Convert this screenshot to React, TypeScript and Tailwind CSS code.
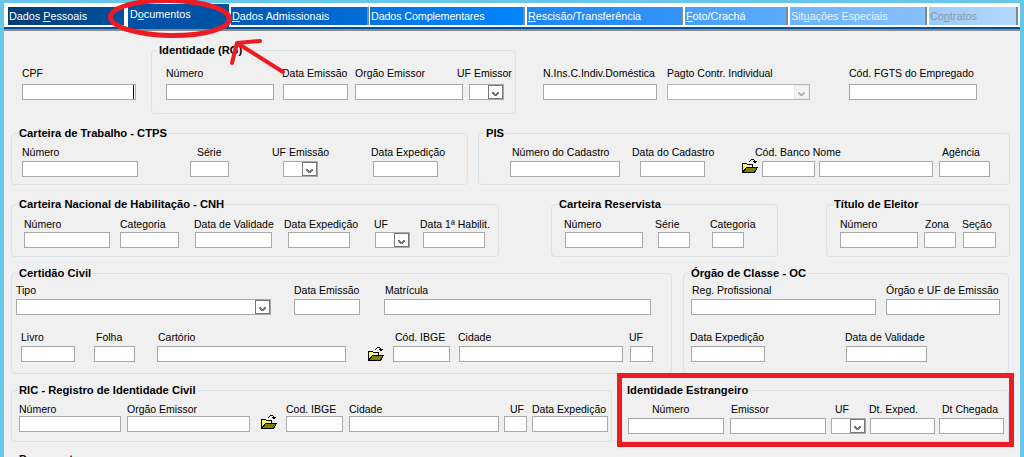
import React from 'react';

const Chevron: React.FC<{ color?: string }> = ({ color = '#7a7a7a' }) => (
  <svg width="9" height="6" viewBox="0 0 9 6" shapeRendering="crispEdges">
    <path d="M1 1h2v1h1v1h1V2h1V1h2v2H7v1H6v1H3V4H2V3H1z" fill={color} />
  </svg>
);

const Folder: React.FC<{ className?: string }> = ({ className = '' }) => (
  <svg width="16" height="14" viewBox="0 0 16 14" shapeRendering="crispEdges" className={`shrink-0 ${className}`}>
    <path d="M0.500 4.500h4l1 1h5v3h-6l-3 5h-1z" fill="#f6f46a" stroke="#000" strokeWidth="1" />
    <path d="M2 6h1v1H2zM4 6h1v1H4zM6 7h1v1H6zM8 7h1v1H8zM3 8h1v1H3zM2 10h1v1H2z" fill="#fff" />
    <path d="M4.500 8.500h11l-3 5h-12z" fill="#808000" stroke="#000" strokeWidth="1" />
    <path d="M7 3V2h1V1h1V0h3v1h1v1h2l-2 3-3-3h2V1H9v1H8v1z" fill="#000" />
  </svg>
);

const Field: React.FC<{ label: string; className: string; lc?: string; children?: React.ReactNode }> = ({
  label,
  className,
  lc = '',
  children,
}) => (
  <div className={`flex shrink-0 flex-col ${className}`}>
    <span className={`h-[13px] whitespace-nowrap leading-[13px] ${lc}`}>{label}</span>
    {children ?? <input readOnly className="h-[16px] w-full border border-[#a9a9a9] bg-white" />}
  </div>
);

const Combo: React.FC<{ disabled?: boolean }> = ({ disabled }) => (
  <div className={`flex h-[16px] w-full border bg-white ${disabled ? 'border-[#b4b8bc]' : 'border-[#a9a9a9]'}`}>
    <div className="flex-1" />
    <div
      className={`flex h-[14px] w-[15px] items-end justify-center border pb-[1px] ${
        disabled ? 'border-[#e8e8e8] bg-[#f4f4f4]' : 'border-[#777777] bg-white'
      }`}
    >
      <Chevron color={disabled ? '#b8b8b8' : '#767676'} />
    </div>
  </div>
);

const Group: React.FC<{ title: string; className: string; children?: React.ReactNode }> = ({
  title,
  className,
  children,
}) => (
  <div className={`relative shrink-0 rounded-[4px] border border-[#d9e2e8] ${className}`}>
    <span className="absolute left-[6px] top-[-8px] h-[14px] whitespace-nowrap bg-[#f0f0f0] px-[1px] text-[11.2px] font-bold leading-[14px]">
      {title}
    </span>
    {children}
  </div>
);

const tabs = [
  { name: <>Dados <u>P</u>essoais</>, box: 'w-[116px] ml-[4px] bg-gradient-to-r from-[#003c74] to-[#00519f]', text: 'text-white' },
  { name: <>D<u>o</u>cumentos</>, box: 'w-[103px] ml-[2px] bg-[#0052a6] border-l-2 border-white', text: 'text-white' },
  { name: <><u>D</u>ados Admissionais</>, box: 'w-[138px] ml-[2px] bg-gradient-to-r from-[#0058b4] to-[#006ed8] border-r-2 border-[#7c8a96]', text: 'text-white' },
  { name: <>Dados Complementares</>, box: 'w-[155px] ml-[1px] bg-gradient-to-r from-[#0074e4] to-[#0086fa] border-r-2 border-[#7c8a96] tracking-[-0.15px]', text: 'text-white' },
  { name: <><u>R</u>escisão/Transferência</>, box: 'w-[156px] ml-[2px] bg-gradient-to-r from-[#1a88f6] to-[#3394f8] border-r-2 border-[#7c8a96]', text: 'text-white' },
  { name: <><u>F</u>oto/Crachá</>, box: 'w-[103px] ml-[2px] bg-gradient-to-r from-[#45a0fb] to-[#5cacfb] border-r-2 border-[#7c8a96]', text: 'text-white' },
  { name: <>Sit<u>u</u>ações Especiais</>, box: 'w-[137px] ml-[2px] bg-gradient-to-r from-[#6cb4fb] to-[#86c0fb] border-r-2 border-[#7c8a96]', text: 'text-[#e6f2ff]' },
  { name: <>Co<u>n</u>tratos</>, box: 'w-[89px] ml-[2px] bg-gradient-to-r from-[#9ccbfc] to-[#b4d8fd] border-r-2 border-[#7c8a96]', text: 'text-[#8a98a6]' },
];

export default function App() {
  return (
    <div
      className="relative h-[457px] w-[1024px] overflow-hidden bg-[#67c6ea] px-[4px] pt-[3px] text-[10.5px] text-black"
      style={{ fontFamily: '"Liberation Sans", Arial, sans-serif' }}
    >
      <div className="flex h-[24px] items-end bg-white pb-[2px] text-[10.8px]">
        {tabs.map((t, i) =>
          i === 1 ? (
            <div key={i} className={`mb-[-2px] h-[23px] pl-[2px] pt-[4px] leading-[13px] ${t.box} ${t.text}`}>
              {t.name}
            </div>
          ) : (
            <div key={i} className={`h-[18px] pl-[1px] pt-[2px] leading-[14px] ${t.box} ${t.text}`}>
              {t.name}
            </div>
          ),
        )}
      </div>
      <div className="h-[2px] bg-[#00509e]" />
      <div className="h-[2px] bg-[#8c8c8c]" />

      <div className="h-[426px] bg-[#f0f0f0] pt-[19px]">
        {/* linha 1 */}
        <div className="flex items-start">
          <Field label="CPF" className="ml-[18px] mt-[17px] w-[114px]" lc="mb-[4px]">
            <div className="h-[16px] w-full border border-[#a9a9a9] bg-white pl-[110px]">
              <div className="h-[14px] w-px bg-black" />
            </div>
          </Field>
          <Group title="Identidade (RG)" className="ml-[15px] flex h-[64px] w-[365px] pt-[16px]">
            <Field label="Número" className="ml-[14px] w-[108px]" lc="mb-[4px]" />
            <Field label="Data Emissão" className="ml-[9px] w-[65px]" lc="mb-[4px] ml-[-1px]" />
            <Field label="Orgão Emissor" className="ml-[7px] w-[108px]" lc="mb-[4px]" />
            <Field label="UF Emissor" className="ml-[6px] w-[35px]" lc="mb-[4px] ml-[-12px]">
              <Combo />
            </Field>
          </Group>
          <Field label="N.Ins.C.Indiv.Doméstica" className="ml-[27px] mt-[17px] w-[114px]" lc="mb-[4px]" />
          <Field label="Pagto Contr. Individual" className="ml-[10px] mt-[17px] w-[143px]" lc="mb-[4px]">
            <Combo disabled />
          </Field>
          <Field label="Cód. FGTS do Empregado" className="ml-[39px] mt-[17px] w-[128px]" lc="mb-[4px]" />
        </div>

        {/* linha 2 */}
        <div className="mt-[19px] flex">
          <Group title="Carteira de Trabalho - CTPS" className="ml-[7px] flex h-[52px] w-[457px] pt-[12px]">
            <Field label="Número" className="ml-[10px] w-[116px]" lc="mb-[2px]" />
            <Field label="Série" className="ml-[52px] w-[39px]" lc="mb-[2px] ml-[7px]" />
            <Field label="UF Emissão" className="ml-[54px] w-[35px]" lc="mb-[2px] ml-[-11px]">
              <Combo />
            </Field>
            <Field label="Data Expedição" className="ml-[55px] w-[65px]" lc="mb-[2px] ml-[-2px]" />
          </Group>
          <Group title="PIS" className="ml-[10px] flex h-[52px] w-[532px] pt-[12px]">
            <Field label="Número do Cadastro" className="ml-[31px] w-[110px]" lc="mb-[2px] ml-[2px]" />
            <Field label="Data do Cadastro" className="ml-[20px] w-[65px]" lc="mb-[2px] ml-[-8px]" />
            <Folder className="ml-[37px] mt-[13px]" />
            <Field label="Cód. Banco Nome" className="ml-[4px] w-[53px]" lc="mb-[2px] ml-[-7px]" />
            <Field label="" className="ml-[4px] w-[114px]" lc="mb-[2px]" />
            <Field label="Agência" className="ml-[6px] w-[51px]" lc="mb-[2px] ml-[3px]" />
          </Group>
        </div>

        {/* linha 3 */}
        <div className="mt-[19px] flex">
          <Group title="Carteira Nacional de Habilitação - CNH" className="ml-[7px] flex h-[53px] w-[488px] pt-[13px]">
            <Field label="Número" className="ml-[12px] w-[86px]" lc="mb-[1px]" />
            <Field label="Categoria" className="ml-[10px] w-[59px]" lc="mb-[1px]" />
            <Field label="Data de Validade" className="ml-[16px] w-[77px]" lc="mb-[1px] ml-[-1px]" />
            <Field label="Data Expedição" className="ml-[16px] w-[62px]" lc="mb-[1px] ml-[-4px]" />
            <Field label="UF" className="ml-[25px] w-[35px]" lc="mb-[1px] ml-[-1px]">
              <Combo />
            </Field>
            <Field label="Data 1ª Habilit." className="ml-[13px] w-[62px]" lc="mb-[1px] ml-[-3px]" />
          </Group>
          <Group title="Carteira Reservista" className="ml-[52px] flex h-[53px] w-[227px] pt-[13px]">
            <Field label="Número" className="ml-[13px] w-[78px]" lc="mb-[1px] ml-[-1px]" />
            <Field label="Série" className="ml-[15px] w-[32px]" lc="mb-[1px] ml-[-3px]" />
            <Field label="Categoria" className="ml-[22px] w-[32px]" lc="mb-[1px] ml-[-2px]" />
          </Group>
          <Group title="Título de Eleitor" className="ml-[48px] flex h-[53px] w-[184px] pt-[13px]">
            <Field label="Número" className="ml-[13px] w-[78px]" lc="mb-[1px]" />
            <Field label="Zona" className="ml-[6px] w-[32px]" lc="mb-[1px] ml-[1px]" />
            <Field label="Seção" className="ml-[7px] w-[33px]" lc="mb-[1px] ml-[-1px]" />
          </Group>
        </div>

        {/* linha 4 */}
        <div className="mt-[16px] flex">
          <Group title="Certidão Civil" className="ml-[7px] h-[101px] w-[661px] pt-[10px]">
            <div className="flex">
              <Field label="Tipo" className="ml-[4px] w-[255px]" lc="mb-[2px]">
                <Combo />
              </Field>
              <Field label="Data Emissão" className="ml-[23px] w-[66px]" lc="mb-[2px]" />
              <Field label="Matrícula" className="ml-[24px] w-[267px]" lc="mb-[2px] ml-[1px]" />
            </div>
            <div className="mt-[16px] flex">
              <Field label="Livro" className="ml-[9px] w-[54px]" lc="mb-[2px]" />
              <Field label="Folha" className="ml-[19px] w-[41px]" lc="mb-[2px] ml-[2px]" />
              <Field label="Cartório" className="ml-[22px] w-[189px]" lc="mb-[2px] ml-[1px]" />
              <Folder className="ml-[22px] mt-[16px]" />
              <Field label="Cód. IBGE" className="ml-[9px] w-[57px]" lc="mb-[2px] ml-[2px]" />
              <Field label="Cidade" className="ml-[9px] w-[164px]" lc="mb-[2px] ml-[-1px]" />
              <Field label="UF" className="ml-[7px] w-[23px]" lc="mb-[2px] ml-[-1px]" />
            </div>
          </Group>
          <Group title="Órgão de Classe - OC" className="ml-[11px] h-[101px] w-[326px] pt-[10px]">
            <div className="flex">
              <Field label="Reg. Profissional" className="ml-[7px] w-[185px]" lc="mb-[2px] ml-[1px]" />
              <Field label="Órgão e UF de Emissão" className="ml-[10px] w-[114px]" lc="mb-[2px]" />
            </div>
            <div className="mt-[16px] flex">
              <Field label="Data Expedição" className="ml-[7px] w-[74px]" lc="mb-[2px] ml-[-1px]" />
              <Field label="Data de Validade" className="ml-[81px] w-[81px]" lc="mb-[2px] ml-[-1px]" />
            </div>
          </Group>
        </div>

        {/* linha 5 */}
        <div className="mt-[16px] flex">
          <Group title="RIC - Registro de Identidade Civil" className="ml-[7px] flex h-[52px] w-[601px] pt-[12px]">
            <Field label="Número" className="ml-[7px] w-[102px]" />
            <Field label="Orgão Emissor" className="ml-[6px] w-[123px]" />
            <Folder className="ml-[11px] mt-[12px]" />
            <Field label="Cod. IBGE" className="ml-[9px] w-[57px]" />
            <Field label="Cidade" className="ml-[6px] w-[150px]" />
            <Field label="UF" className="ml-[5px] w-[23px]" lc="ml-[6px]" />
            <Field label="Data Expedição" className="ml-[5px] w-[76px]" />
          </Group>
          <Group title="Identidade Estrangeiro" className="ml-[7px] flex h-[52px] w-[390px] pt-[12px]">
            <Field label="Número" className="ml-[8px] w-[96px]" lc="mb-[2px] ml-[24px]" />
            <Field label="Emissor" className="ml-[6px] w-[96px]" lc="mb-[2px] ml-[1px]" />
            <Field label="UF" className="ml-[5px] w-[35px]" lc="mb-[2px] ml-[4px]">
              <Combo />
            </Field>
            <Field label="Dt. Exped." className="ml-[4px] w-[65px]" lc="mb-[2px] ml-[-1px]" />
            <Field label="Dt Chegada" className="ml-[4px] w-[65px]" lc="mb-[2px] ml-[3px]" />
          </Group>
        </div>

        {/* linha 6, cortada pela janela */}
        <div className="mt-[17px] flex">
          <Group title="Passaporte" className="ml-[7px] h-[40px] w-[601px]" />
        </div>
      </div>

      {/* marcações em vermelho por cima da tela */}
      <svg width="1024" height="457" className="pointer-events-none absolute left-0 top-0" fill="none">
        <ellipse cx="170" cy="18" rx="59.500" ry="17.500" stroke="#ed1c24" strokeWidth="5" transform="rotate(1 170 18)" />
        <path
          d="M283 72L237 43M237 43L260 41M237 43L232 63"
          stroke="#ed1c24"
          strokeWidth="4"
          strokeLinecap="round"
        />
        <rect x="619.500" y="375.500" width="392" height="69" stroke="#ed1c24" strokeWidth="5" />
      </svg>
    </div>
  );
}
